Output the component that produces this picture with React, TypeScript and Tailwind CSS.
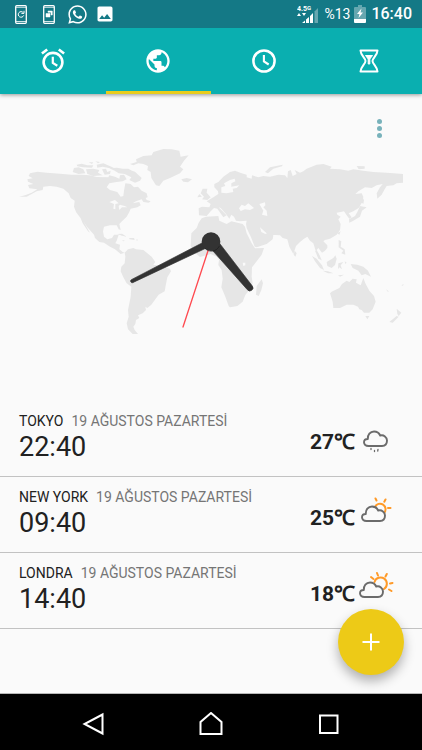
import React from "react";
import { MdImage, MdPublic } from "react-icons/md";
import { FaWhatsapp } from "react-icons/fa";

const LAND = [
  // North America
  "M57 590L75 586L95 578L112 568L88 565L84 555L100 552L84 545L82 538L98 535L86 528L90 520L112 515L140 518L180 521L215 524L245 524L270 526L290 531L325 532L328 526L345 530L358 536L360 526L372 524L380 538L368 544L350 546L328 550L320 562L330 570L352 576L362 590L370 588L372 572L376 550L392 552L402 562L414 560L425 572L440 580L443 592L425 598L408 604L398 610L418 606L422 616L412 622L392 626L388 636L380 650L366 664L358 672L362 690L356 688L350 676L330 676L312 680L309 694L312 710L322 718L336 714L342 704L356 704L350 722L346 730L360 734L358 748L368 756L374 758L362 762L345 748L330 740L312 728L298 726L285 714L282 704L262 682L250 664L270 698L264 694L248 670L242 655L228 636L222 620L224 602L212 594L206 580L190 566L170 560L150 558L130 560L128 570L110 574L95 582L80 590Z",
  "M425 598L436 592L440 600L452 604L446 608L430 606Z",
  // Arctic islands
  "M218 516L222 504L236 502L250 508L256 520L236 522ZM230 494L245 491L262 496L280 496L276 503L250 502L232 499ZM258 508L280 506L298 510L294 518L308 526L280 528L262 522ZM266 487L280 487L276 492ZM286 484L300 486L294 490ZM290 494L310 490L334 500L346 506L330 505L308 500L292 503ZM306 508L318 506L322 516L332 512L330 522L314 524ZM328 505L350 503L368 506L385 506L396 512L405 515L425 534L420 542L405 548L388 540L394 532L374 522L356 520L344 512Z",
  // South America
  "M374 758L384 748L400 744L408 748L430 750L442 760L455 770L466 786L460 794L485 798L510 806L513 814L502 832L498 852L494 874L476 884L466 898L454 914L442 924L436 920L438 930L428 940L414 946L418 954L408 960L406 972L400 980L404 990L414 1002L398 1002L384 988L380 970L386 950L384 930L392 890L394 860L380 850L370 832L362 814L364 800L374 790L376 770Z",
  "M352 702L366 701L380 710L366 707ZM388 714L402 714L404 720L388 718ZM367 720L375 722L369 724ZM409 718L415 720L410 722Z",
  // Greenland, Iceland, British Isles
  "M390 492L410 486L408 478L430 468L455 466L460 456L490 447L515 448L538 452L542 470L566 466L552 482L540 500L550 508L540 520L510 534L490 542L478 558L468 556L454 534L452 516L442 510L444 498L430 492L415 490L400 496Z",
  "M544 538L560 534L576 538L564 547L550 545ZM606 598L612 590L602 580L608 566L622 566L620 578L632 592L622 600ZM592 592L598 582L606 590Z",
  // Eurasia
  "M597 646L596 625L606 620L628 622L632 612L620 604L640 592L655 582L654 574L643 562L643 552L655 546L670 530L690 516L705 512L725 520L740 524L740 532L755 536L756 526L775 532L790 528L810 530L835 524L855 526L862 534L864 514L872 510L878 528L890 522L884 510L900 518L910 514L920 506L935 500L950 494L970 492L995 500L990 506L1020 508L1045 512L1060 508L1090 512L1120 516L1160 518L1180 520L1209 522L1209 548L1190 550L1180 556L1160 558L1154 568L1145 584L1132 596L1130 580L1140 562L1148 552L1130 556L1115 564L1095 562L1075 574L1066 582L1085 580L1090 590L1088 604L1076 624L1060 634L1046 640L1055 652L1048 656L1040 646L1032 634L1022 636L1010 638L1012 644L1022 650L1015 658L1022 672L1020 690L1010 704L990 716L975 720L970 724L982 736L982 744L975 752L966 758L955 744L950 750L958 764L966 782L955 772L948 756L940 730L930 722L922 710L912 716L900 726L888 738L880 762L868 740L862 718L848 714L840 706L815 704L800 700L780 682L784 696L796 702L804 698L820 706L818 718L800 732L770 742L764 740L754 714L740 684L738 672L740 662L720 664L708 662L702 650L694 644L688 656L678 642L662 624L656 622L680 646L670 652L652 626L642 624L632 634L620 648Z",
  "M795 516L810 502L848 494L846 499L820 506L804 520ZM1070 498L1094 499L1094 506L1076 508ZM1047 658L1065 648L1072 636L1080 618L1100 622L1086 632L1080 650L1060 662L1048 668ZM1082 584L1092 600L1090 612L1083 606Z",
  // Africa
  "M605 655L618 650L655 648L658 662L680 672L694 664L728 672L735 680L740 700L755 730L765 745L792 744L785 764L770 784L756 802L755 830L758 850L748 870L736 885L728 905L712 918L690 922L686 918L676 890L664 862L668 836L665 810L655 795L657 780L650 770L632 762L600 771L582 756L572 738L574 700L590 684L596 668Z",
  "M785 838L789 850L784 870L776 888L768 884L770 858Z",
  // South-east Asia
  "M884 752L890 760L886 770L881 764ZM936 768L950 776L966 796L972 810L960 804L945 784ZM968 812L984 814L1000 820L984 820ZM945 752L956 760L964 780L955 776ZM980 786L1000 774L1006 766L1010 776L1005 795L995 804L982 798ZM1015 790L1030 786L1022 796L1026 808L1018 802L1014 808ZM1016 720L1024 724L1022 740L1034 748L1036 764L1024 760L1030 752L1016 742ZM1012 700L1022 694L1018 704ZM1034 784L1040 788L1036 792ZM1014 826L1032 824L1020 830ZM1052 792L1072 794L1090 800L1104 812L1113 830L1096 822L1085 826L1075 812L1058 804Z",
  // Oceania
  "M990 880L995 875L1018 864L1026 852L1040 842L1048 846L1058 836L1070 838L1068 848L1082 856L1090 834L1096 850L1108 872L1122 888L1127 905L1118 928L1108 938L1092 938L1085 930L1078 928L1074 920L1060 914L1040 914L1020 924L1000 924L998 905Z",
  "M1096 948L1108 948L1102 958ZM1168 966L1190 948L1196 950L1178 968ZM1190 926L1204 938L1196 948L1192 942ZM1158 868L1166 874L1164 876ZM1204 856L1211 852L1209 857Z",
];

const WATER = [
  "M664 578L664 562L676 558L672 550L690 540L704 536L706 544L694 550L694 560L718 556L710 564L698 566L700 576L680 580Z",
  "M717 625L725 614L735 618L745 610L762 624L750 630L735 628L722 633Z",
  "M778 612L795 607L796 616L790 622L800 632L802 648L786 644L790 632Z",
  "M328 606L345 600L356 610L346 612L346 628L340 626L342 612ZM360 614L374 618L382 622L366 622L358 630L356 618Z",
  "M728 788L736 788L736 796L730 798Z",
];

function WorldClock() {
  return (
    <svg viewBox="0 282 1266 918" className="block w-full" role="img" aria-label="16:40">
      <path d={LAND.join("")} fill="#e6e6e6" />
      <path d={WATER.join("")} fill="#fafafa" />
      <path d="M633 725L549 981" stroke="#ff4a50" strokeWidth="4" strokeLinecap="round" />
      <path d="M629 717L394 839A5 5 0 0 0 398 848L638 735Z" fill="#333" stroke="#333" strokeWidth="2" />
      <path d="M623 735L742 869A9 9 0 0 0 757 858L648 716Z" fill="#333" stroke="#333" strokeWidth="2" />
      <circle cx="633" cy="725" r="28" fill="#333" />
      <path d="M615 745A26 26 0 0 0 658 738" stroke="#1c1c1c" strokeWidth="2" fill="none" />
    </svg>
  );
}

function AlarmIcon() {
  return (
    <svg viewBox="0 0 24 24" className="size-6 overflow-visible" fill="none" stroke="currentColor" strokeWidth="2.6">
      <circle cx="12" cy="13.3" r="9.4" />
      <path d="M0.900 4.600L6.200 0.400M17.800 0.400L23.100 4.600" />
      <path d="M11.800 7.800V13.900L16.300 16.700" strokeWidth="2.2" />
    </svg>
  );
}

function ClockIcon() {
  return (
    <svg viewBox="0 0 24 24" className="size-6" fill="none" stroke="currentColor" strokeWidth="2.5">
      <circle cx="12" cy="12" r="10.600" />
      <path d="M11.900 6V12.500L16.700 15.500" strokeWidth="2.100" />
    </svg>
  );
}

function HourglassIcon() {
  return (
    <svg viewBox="0 0 24 26" className="h-[26px] w-6" fill="none" stroke="currentColor" strokeWidth="2" strokeLinejoin="round">
      <path d="M3.500 2.500H20.500C20.500 7 15.500 10 15.500 13C15.500 16 20.500 19 20.500 23.500H3.500C3.500 19 8.500 16 8.500 13C8.500 10 3.500 7 3.500 2.500Z" />
      <path d="M8.500 7.500H15.500L12.800 11V16H11.200V11Z" fill="currentColor" strokeWidth="1" />
    </svg>
  );
}

function PhoneIcon({ kind }: { kind: "refresh" | "windows" }) {
  return (
    <svg viewBox="0 0 12 19" className="h-[19px] w-3" fill="none" stroke="currentColor">
      <rect x="0.700" y="0.700" width="10.600" height="17.600" rx="1" strokeWidth="1.300" />
      <path d="M1 2.300H11M1 16.500H11" strokeWidth="0.800" />
      {kind === "refresh" ? (
        <path d="M8.200 7.600A2.800 2.800 0 1 0 8.700 10.400M9 5.800V8.400H6.400" strokeWidth="1" />
      ) : (
        <path d="M3 8.500H7V12H3ZM5 6H9.300V10H8V7.300H5Z" fill="currentColor" strokeWidth="0.500" />
      )}
    </svg>
  );
}

function SignalIcon() {
  return (
    <svg viewBox="0 0 22 20" className="h-5 w-[22px]" fill="currentColor">
      <text x="0" y="7" fontSize="7" fontWeight="700" fontFamily="Roboto, sans-serif">4.5</text>
      <text x="10" y="6" fontSize="6" fontWeight="700" fontFamily="Roboto, sans-serif">G</text>
      <path d="M0 12L2 9L4 12ZM5 9H9L7 12Z" />
      <path d="M5 19L8 16.500V19ZM9 15.500L12 13V19H9ZM13 12L16 9V19H13Z" />
      <path d="M17.500 7.500L21 4V19H17.500Z" opacity="0.350" />
    </svg>
  );
}

function BatteryIcon() {
  return (
    <svg viewBox="0 0 12 18" className="h-[18px] w-3" fill="currentColor">
      <path d="M4 0H8V2H11Q12 2 12 3V14H0V3Q0 2 1 2H4Z" opacity="0.350" />
      <path d="M0 14H12V17Q12 18 11 18H1Q0 18 0 17Z" />
      <path d="M7.500 3.500L3 9H5.500L4.500 13L9 7.500H6.500Z" />
    </svg>
  );
}

type Sky = "rain" | "low-sun" | "sun";

const SKY_VIEW: Record<Sky, string> = {
  rain: "-1 0 36 32",
  "low-sun": "-1 5 36 32",
  sun: "0 6 36 32",
};

function WeatherIcon({ sky }: { sky: Sky }) {
  return (
    <svg viewBox={SKY_VIEW[sky]} className="h-8 w-9 overflow-visible" fill="none" strokeLinecap="round" strokeLinejoin="round">
      {sky === "low-sun" && (
        <path d="M15 10A5.500 5.500 0 1 1 24 16M15.500 1.500L16.500 3.500M25.500 2.500L24.300 4.700M28 11H30.500" stroke="#ff9a28" strokeWidth="2" />
      )}
      {sky === "sun" && (
        <path d="M15.500 10A6.300 6.300 0 1 1 25 17M18 1L19 3.500M27.800 2L26.500 4.500M12 5L14.500 7M31 11.500L33.500 11M30 17.500L32.500 19" stroke="#ff9a28" strokeWidth="2" />
      )}
      <g
        stroke="#6b6b6b"
        strokeWidth="1.9"
        transform={sky === "rain" ? "translate(3 -4)" : sky === "sun" ? "translate(0 1)" : "translate(1 0)"}
      >
        <path
          fill="#fafafa"
          d="M5.500 24C2.700 24 1 22.400 1 20.300C1 18.200 2.700 17 4.800 17C4.500 12.800 7.200 9.500 11 9.500C14 9.500 16.200 11.200 17.200 13.500C20.800 12.500 24 15.200 24 18.600C24 22 22 24 19 24Z"
        />
        {sky === "rain" && <path d="M8 26.500V27.500M11.500 28.500V29.500M15 27.500L14.700 29" strokeWidth="1.300" />}
      </g>
    </svg>
  );
}

const CITIES: { name: string; date: string; time: string; temp: string; sky: Sky }[] = [
  { name: "TOKYO", date: "19 AĞUSTOS PAZARTESİ", time: "22:40", temp: "27℃", sky: "rain" },
  { name: "NEW YORK", date: "19 AĞUSTOS PAZARTESİ", time: "09:40", temp: "25℃", sky: "low-sun" },
  { name: "LONDRA", date: "19 AĞUSTOS PAZARTESİ", time: "14:40", temp: "18℃", sky: "sun" },
];

const TABS = [
  { label: "Alarm", icon: <AlarmIcon /> },
  { label: "Dünya saati", icon: <MdPublic size={28} /> },
  { label: "Kronometre", icon: <ClockIcon /> },
  { label: "Zamanlayıcı", icon: <HourglassIcon /> },
];

export default function App() {
  return (
    <div className="flex min-h-screen flex-col bg-[#fafafa] font-['Roboto','Noto_Sans',sans-serif] text-[#212121]">
      <header className="relative z-10 text-white shadow-[0_1px_4px_rgba(0,0,0,0.4)]">
        <div className="flex h-7 items-center justify-between bg-[#147986] pl-[15px] pr-[10px]">
          <div className="flex items-center">
            <PhoneIcon kind="refresh" />
            <span className="ml-4"><PhoneIcon kind="windows" /></span>
            <FaWhatsapp size={21} className="ml-3" />
            <MdImage size={20} className="ml-[7px]" />
          </div>
          <div className="flex items-center">
            <SignalIcon />
            <span className="ml-[5px] text-sm leading-5">%13</span>
            <span className="ml-1"><BatteryIcon /></span>
            <span className="ml-[5px] text-base font-medium leading-5">16:40</span>
          </div>
        </div>
        <nav className="grid h-[66px] grid-cols-4 bg-[#0aafb0]">
          {TABS.map((tab, i) => (
            <button
              key={tab.label}
              aria-label={tab.label}
              className={`flex items-center justify-center border-b-[3px] pt-[3px] ${i === 1 ? "border-[#e9cc1c]" : "border-transparent"}`}
            >
              {tab.icon}
            </button>
          ))}
        </nav>
      </header>

      <main className="relative flex-1 border-b border-[#b8b8b8]">
        <WorldClock />
        <button aria-label="Menü" className="absolute right-[31px] top-4 flex h-9 w-6 flex-col items-center justify-center gap-[2px]">
          <span className="size-[5px] rounded-full bg-[#78b2bb]" />
          <span className="size-[5px] rounded-full bg-[#78b2bb]" />
          <span className="size-[5px] rounded-full bg-[#78b2bb]" />
        </button>
        <ul className="pt-px">
          {CITIES.map((city) => (
            <li key={city.name} className="flex h-[76px] items-center justify-between border-b border-[#c2c2c2] pl-[19px] pr-[27px]">
              <div className="pb-1">
                <div className="flex gap-2 text-sm leading-5">
                  <span>{city.name}</span>
                  <span className="text-[#757575]">{city.date}</span>
                </div>
                <div className="text-[27px] leading-8">{city.time}</div>
              </div>
              <div className="flex items-center gap-1 pt-[6px]">
                <span className="font-['Roboto',sans-serif] text-[21px] font-bold leading-6">{city.temp}</span>
                <WeatherIcon sky={city.sky} />
              </div>
            </li>
          ))}
        </ul>
        <button
          aria-label="Şehir ekle"
          className="absolute bottom-[18px] right-[18px] flex size-[66px] items-center justify-center rounded-full bg-[#edca17] text-white shadow-[0_6px_12px_rgba(0,0,0,0.3)]"
        >
          <svg viewBox="0 0 18 18" className="size-[18px]" stroke="currentColor" strokeWidth="2">
            <path d="M9 0.500V17.500M0.500 9H17.500" />
          </svg>
        </button>
      </main>

      <nav className="grid h-14 grid-cols-[1fr_118px_117px_118px_1fr] items-center bg-black pt-[3px] text-white">
        <span />
        <button aria-label="Geri" className="flex justify-center">
          <svg viewBox="0 0 24 24" className="size-6" fill="none" stroke="currentColor" strokeWidth="2">
            <path d="M20.500 2.500V21.500L2.500 12Z" />
          </svg>
        </button>
        <button aria-label="Ana ekran" className="flex justify-center">
          <svg viewBox="0 0 24 24" className="size-6" fill="none" stroke="currentColor" strokeWidth="2">
            <path d="M1.500 22V10L12 1L22.500 10V22Z" />
          </svg>
        </button>
        <button aria-label="Son uygulamalar" className="flex justify-center">
          <svg viewBox="0 0 24 24" className="size-6" fill="none" stroke="currentColor" strokeWidth="2">
            <path d="M3 3.500H20.500V21H3Z" />
          </svg>
        </button>
        <span />
      </nav>
    </div>
  );
}
